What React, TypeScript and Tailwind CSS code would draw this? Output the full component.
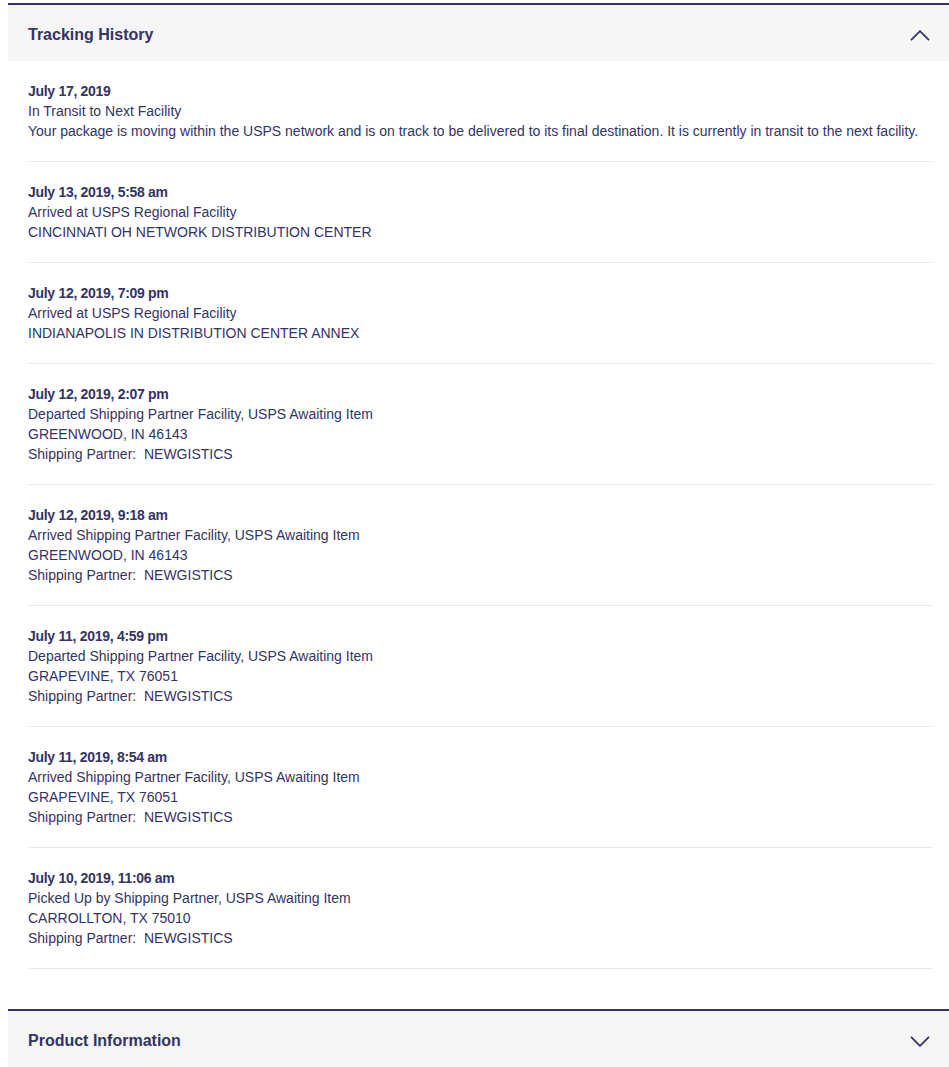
import React from 'react';

type TrackingEvent = {
    date: string;
    lines: string[];
};

const events: TrackingEvent[] = [
    {
        date: 'July 17, 2019',
        lines: [
            'In Transit to Next Facility',
            'Your package is moving within the USPS network and is on track to be delivered to its final destination. It is currently in transit to the next facility.',
        ],
    },
    { date: 'July 13, 2019, 5:58 am', lines: ['Arrived at USPS Regional Facility', 'CINCINNATI OH NETWORK DISTRIBUTION CENTER'] },
    { date: 'July 12, 2019, 7:09 pm', lines: ['Arrived at USPS Regional Facility', 'INDIANAPOLIS IN DISTRIBUTION CENTER ANNEX'] },
    {
        date: 'July 12, 2019, 2:07 pm',
        lines: ['Departed Shipping Partner Facility, USPS Awaiting Item', 'GREENWOOD, IN 46143', 'Shipping Partner:\u00a0 NEWGISTICS'],
    },
    {
        date: 'July 12, 2019, 9:18 am',
        lines: ['Arrived Shipping Partner Facility, USPS Awaiting Item', 'GREENWOOD, IN 46143', 'Shipping Partner:\u00a0 NEWGISTICS'],
    },
    {
        date: 'July 11, 2019, 4:59 pm',
        lines: ['Departed Shipping Partner Facility, USPS Awaiting Item', 'GRAPEVINE, TX 76051', 'Shipping Partner:\u00a0 NEWGISTICS'],
    },
    {
        date: 'July 11, 2019, 8:54 am',
        lines: ['Arrived Shipping Partner Facility, USPS Awaiting Item', 'GRAPEVINE, TX 76051', 'Shipping Partner:\u00a0 NEWGISTICS'],
    },
    {
        date: 'July 10, 2019, 11:06 am',
        lines: ['Picked Up by Shipping Partner, USPS Awaiting Item', 'CARROLLTON, TX 75010', 'Shipping Partner:\u00a0 NEWGISTICS'],
    },
];

function Chevron({ up }: { up?: boolean }) {
    return (
        <svg width="20" height="11" viewBox="0 0 20 11" fill="none" className="shrink-0">
            <path
                d={up ? 'M1 10.2 L10 1.2 L19 10.2' : 'M1 0.8 L10 9.8 L19 0.8'}
                stroke="#333366"
                strokeWidth="1.8"
            />
        </svg>
    );
}

function SectionHeader({ title, open }: { title: string; open?: boolean }) {
    return (
        <div className="border-t-2 border-[#333366] bg-[#f6f6f6]">
            <div className="h-[56px] pt-1 pl-5 pr-[19px] flex items-center justify-between">
                <h2 className="text-[16px] font-bold text-[#333366]">{title}</h2>
                <Chevron up={open} />
            </div>
        </div>
    );
}

export default function App() {
    return (
        <div className="min-h-screen bg-white pt-[3px] pl-2 text-[#333366] font-['Liberation_Sans',Arial,sans-serif]">
            <div className="bg-[#f6f6f6]">
                <SectionHeader title="Tracking History" open />
                <div className="bg-white pl-5 pr-4 pb-10">
                    {events.map((ev) => (
                        <div key={ev.date} className="py-5 border-b border-[#e7e7e7] text-[14px] leading-5">
                            <p className="font-bold tracking-[-0.3px]">{ev.date}</p>
                            {ev.lines.map((line) => (
                                <p key={line}>{line}</p>
                            ))}
                        </div>
                    ))}
                </div>
                <SectionHeader title="Product Information" />
            </div>
        </div>
    );
}
